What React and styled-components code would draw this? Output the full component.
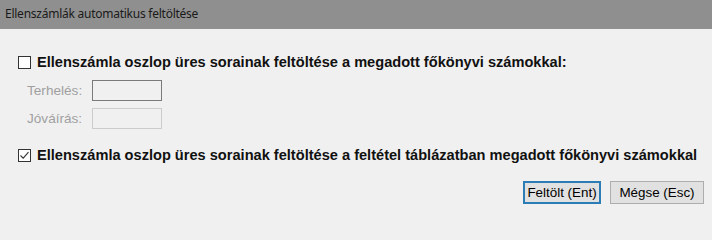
import React from 'react';
import styled, { createGlobalStyle } from 'styled-components';

const GlobalStyle = createGlobalStyle`
  html, body {
    margin: 0;
    padding: 0;
    background: #f0f0f0;
  }
`;

const Dialog = styled.div`
  width: 712px;
  height: 215px;
  display: flex;
  flex-direction: column;
  background: #f0f0f0;
  font-family: "Liberation Sans", Arial, sans-serif;
  color: #000;
  overflow: hidden;
`;

const TitleBar = styled.div`
  height: 29px;
  box-sizing: border-box;
  padding: 0 0 2px 5px;
  display: flex;
  align-items: center;
  background: #8f8f8f;
  color: #1a1a1a;
  font-family: "Noto Sans", "Open Sans", sans-serif;
  font-size: 12px;
  letter-spacing: -0.25px;
`;

const Body = styled.div`
  flex: 1;
  display: flex;
  flex-direction: column;
  padding: 26px 0 0 18px;
`;

const CheckRow = styled.label`
  display: flex;
  align-items: center;
  gap: 6px;
  height: 14px;
  font-size: 14.6px;
  font-weight: bold;
  color: #111;
  margin-top: ${p => p.$top || 0}px;
`;

const Box = styled.span`
  width: 13px;
  height: 13px;
  box-sizing: border-box;
  border: 1px solid #333;
  background: #fff;
  display: flex;
  align-items: center;
  justify-content: center;
  flex-shrink: 0;
`;

const FieldGrid = styled.div`
  display: grid;
  grid-template-columns: 65px 70px;
  row-gap: 7px;
  align-items: center;
  margin: 11px 0 0 9px;
`;

const FieldLabel = styled.span`
  font-size: 13.6px;
  color: #a0a0a0;
`;

const Field = styled.div`
  height: 21px;
  box-sizing: border-box;
  border: 1px solid ${p => (p.$dark ? '#7a7a7a' : '#cccccc')};
  background: #f0f0f0;
`;

const Footer = styled.div`
  display: flex;
  justify-content: flex-end;
  gap: 9px;
  padding: 0 8px 0 0;
  margin-top: 19px;
`;

const Button = styled.button`
  height: 23px;
  width: ${p => p.$w}px;
  box-sizing: border-box;
  padding: 0;
  background: #e1e1e1;
  border: ${p => (p.$focus ? '2px solid #2c7cb5' : '1px solid #adadad')};
  font-family: "Liberation Sans", Arial, sans-serif;
  font-size: 13.4px;
  color: #000;
`;

function Check({ checked }) {
  return (
    <Box>
      {checked && (
        <svg width="11" height="11" viewBox="0 0 11 11">
          <path d="M1.5 5.5 L4.2 8.2 L9.5 2.2" fill="none" stroke="#333" strokeWidth="1.1" />
        </svg>
      )}
    </Box>
  );
}

export default function App() {
  return (
    <>
      <GlobalStyle />
      <Dialog>
        <TitleBar>Ellenszámlák automatikus feltöltése</TitleBar>
        <Body>
          <CheckRow>
            <Check />
            Ellenszámla oszlop üres sorainak feltöltése a megadott főkönyvi számokkal:
          </CheckRow>
          <FieldGrid>
            <FieldLabel>Terhelés:</FieldLabel>
            <Field $dark />
            <FieldLabel>Jóváírás:</FieldLabel>
            <Field />
          </FieldGrid>
          <CheckRow $top={19}>
            <Check checked />
            Ellenszámla oszlop üres sorainak feltöltése a feltétel táblázatban megadott főkönyvi számokkal
          </CheckRow>
          <Footer>
            <Button $w={78} $focus>Feltölt (Ent)</Button>
            <Button $w={94}>Mégse (Esc)</Button>
          </Footer>
        </Body>
      </Dialog>
    </>
  );
}
